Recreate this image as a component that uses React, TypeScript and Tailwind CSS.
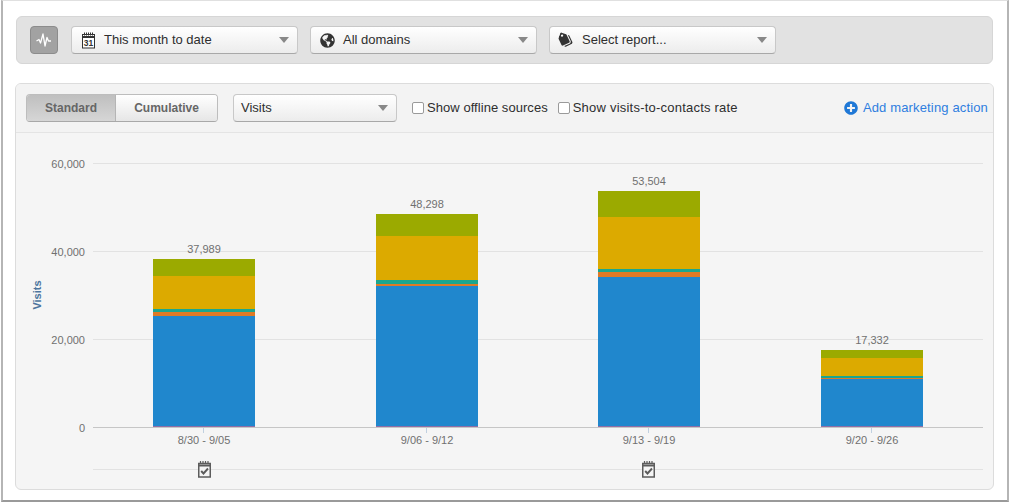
import { FaGlobeAmericas, FaTags, FaPlusCircle } from 'react-icons/fa';

const font = '"Liberation Sans", Arial, sans-serif';

const bars = [
  { x: 153, label: '8/30 - 9/05', total: '37,989', top: 259, stops: [276, 309, 312, 316, 426] },
  { x: 376, label: '9/06 - 9/12', total: '48,298', top: 214, stops: [236, 280, 284, 286, 426] },
  { x: 598, label: '9/13 - 9/19', total: '53,504', top: 191, stops: [217, 269, 272, 277, 426] },
  { x: 821, label: '9/20 - 9/26', total: '17,332', top: 350, stops: [358, 376, 378, 379, 426] },
];
const colors = ['#9baa00', '#dcaa00', '#1ba68e', '#df7a26', '#2087cd'];

function Caret() {
  return <span className="ml-auto h-0 w-0 border-x-[5px] border-t-[6px] border-x-transparent border-t-[#888888]" />;
}

function Select({ width, icon, label }: { width: string; icon?: React.ReactNode; label: string }) {
  return (
    <div className={`${width} flex h-[28px] shrink-0 items-center rounded-[4px] border border-[#c8c8c8] border-b-[#a8a8a8] bg-gradient-to-b from-white to-[#ececec] pl-[7px] pr-[8px] text-[13px] text-[#2e2e2e]`}>
      {icon}
      <span>{label}</span>
      <Caret />
    </div>
  );
}

function CalendarIcon() {
  return (
    <svg width="15" height="17" viewBox="0 0 15 17" className="ml-[2px] mr-[8px] text-[#333333]">
      <rect x="1.5" y="2.5" width="12" height="13.5" fill="#ffffff" stroke="currentColor" />
      <path d="M1.5 5h12" stroke="currentColor" strokeWidth="2" />
      <path d="M3.5 .5v3M5.5 .5v3M7.5 .5v3M9.5 .5v3M11.5 .5v3" stroke="currentColor" />
      <text x="7.5" y="14" textAnchor="middle" fontSize="8.5" fontWeight="700" fontFamily={font} fill="currentColor">31</text>
    </svg>
  );
}

function PulseIcon() {
  return (
    <svg width="16" height="14" viewBox="0 0 16 14" fill="none" stroke="#ffffff" strokeWidth="1.3" strokeLinejoin="round">
      <path d="M0.5 8l2.5-1.500 1.500 3.500 2.500-9 2 12 2-8.500 1.500 3.500h2.500" />
    </svg>
  );
}

function Check({ label, tracking }: { label: string; tracking: string }) {
  return (
    <label className={`flex items-center text-[13px] text-[#2e2e2e] ${tracking}`}>
      <span className="mr-[3px] h-[12px] w-[12px] rounded-[2px] border border-[#9a9a9a] bg-white" />
      {label}
    </label>
  );
}

function Chart() {
  return (
    <svg width="977" height="357" viewBox="16 133 977 357" className="block" fontFamily={font}>
      {[163, 251, 339, 469].map((y) => (
        <rect key={y} x="93" y={y} width="890" height="1" fill="#e2e2e2" />
      ))}
      <rect x="93" y="427" width="890" height="1" fill="#c6c6c6" />
      {[['60,000', 164], ['40,000', 252], ['20,000', 340], ['0', 428]].map(([t, y]) => (
        <text key={t} x="85" y={Number(y) + 4} textAnchor="end" fontSize="11" fill="#707070">{t}</text>
      ))}
      <text transform="translate(41 295) rotate(-90)" textAnchor="middle" fontSize="11" fontWeight="700" fill="#4d759e">Visits</text>
      {bars.map((b) => {
        let y = b.top;
        return (
          <g key={b.label}>
            {b.stops.map((end, i) => {
              const rect = <rect key={i} x={b.x} y={y} width="102" height={end - y} fill={colors[i]} />;
              y = end;
              return rect;
            })}
            <rect x={b.x} y="426" width="102" height="1" fill="#8f6fa6" />
            <text x={b.x + 51} y={b.top - 6} textAnchor="middle" fontSize="11" fill="#707070">{b.total}</text>
            <rect x={b.x + 50} y="428" width="1" height="5" fill="#c0d0e0" />
            <text x={b.x + 51} y="444" textAnchor="middle" fontSize="11" fill="#707070">{b.label}</text>
          </g>
        );
      })}
      {[198, 642].map((x) => (
        <g key={x} transform={`translate(${x} 461)`} fill="none" stroke="#5c5c5c">
          <rect x="0.75" y="2.5" width="11.5" height="13.5" fill="#f5f5f5" strokeWidth="1.5" />
          <path d="M0.5 4.5h12" strokeWidth="2" />
          <path d="M2.5 0v3M5 0v3M7.5 0v3M10 0v3" strokeWidth="1.2" />
          <path d="M3.2 10l2.3 2.5L10 7.5" strokeWidth="1.9" />
        </g>
      ))}
    </svg>
  );
}

export default function App() {
  return (
    <div className="h-[503px] w-[1010px] overflow-hidden bg-white" style={{ fontFamily: font }}>
      <div className="ml-[1px] h-[502px] w-[1008px] border-x-2 border-t border-b-2 border-x-[#b5b5b5] border-t-[#e0e0e0] border-b-[#9a9a9a] pl-[12px] pt-[15px]">
        <div className="ml-[1px] flex h-[48px] w-[977px] items-center gap-[12px] rounded-[6px] border border-[#d6d6d6] bg-[#e2e2e2] pl-[13px]">
          <div className="mr-[1px] flex h-[28px] w-[28px] items-center justify-center rounded-[4px] border border-[#8c8c8c] bg-[#a2a2a2]">
            <PulseIcon />
          </div>
          <Select width="w-[227px]" icon={<CalendarIcon />} label="This month to date" />
          <Select width="w-[227px]" icon={<FaGlobeAmericas className="ml-[2px] mr-[8px] h-[15px] w-[15px] text-[#333333]" />} label="All domains" />
          <Select width="w-[227px]" icon={<FaTags className="ml-[1px] mr-[9px] h-[15px] w-[15px] rotate-[20deg] text-[#333333]" />} label="Select report..." />
        </div>
        <div className="mt-[19px] h-[407px] w-[979px] overflow-hidden rounded-[6px] border border-[#dcdcdc] bg-[#f5f5f5]">
          <div className="flex h-[49px] items-center border-b border-[#e4e4e4] bg-[#f3f3f3] pl-[10px] pr-[5px]">
            <div className="flex h-[28px] w-[192px] overflow-hidden rounded-[4px] border border-[#bdbdbd] border-b-[#a8a8a8] text-[12px] font-bold text-[#666666]">
              <div className="flex w-[89px] items-center justify-center border-r border-[#b5b5b5] bg-gradient-to-b from-[#bfbfbf] to-[#d6d6d6]">Standard</div>
              <div className="flex flex-1 items-center justify-center bg-gradient-to-b from-white to-[#e6e6e6]">Cumulative</div>
            </div>
            <div className="ml-[15px]">
              <Select width="w-[164px]" label="Visits" />
            </div>
            <div className="ml-[15px]"><Check label="Show offline sources" tracking="tracking-[0.05px]" /></div>
            <div className="ml-[10px]"><Check label="Show visits-to-contacts rate" tracking="tracking-[0.22px]" /></div>
            <div className="ml-auto flex items-center text-[13px] tracking-[0.15px] text-[#2f7ee0]">
              <FaPlusCircle className="mr-[5px] h-[14px] w-[14px] text-[#1f78d6]" />
              Add marketing action
            </div>
          </div>
          <Chart />
        </div>
      </div>
    </div>
  );
}
